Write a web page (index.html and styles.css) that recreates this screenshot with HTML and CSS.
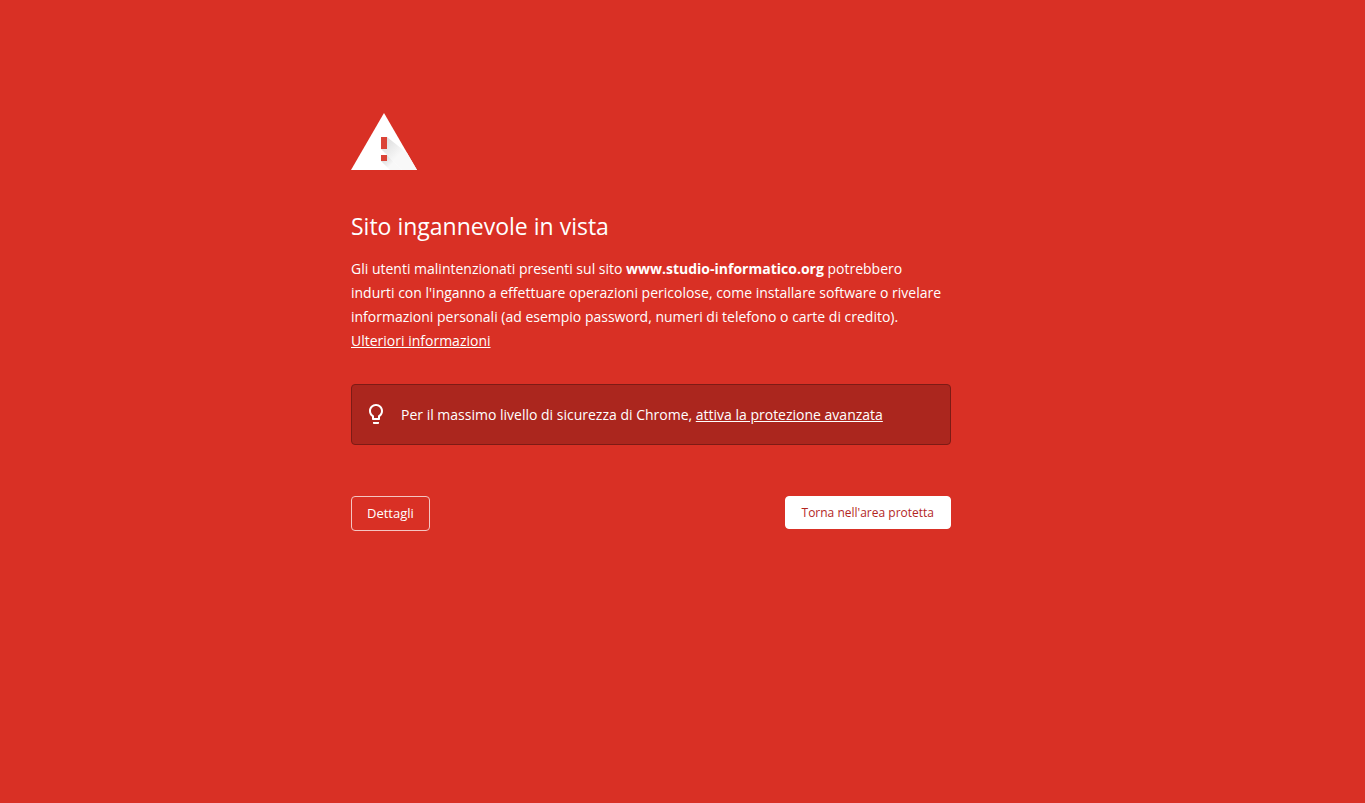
FILE: index.html
```html
<!DOCTYPE html>
<html lang="it">
<head>
<meta charset="utf-8">
<meta name="viewport" content="width=device-width, initial-scale=1">
<title>Errore di sicurezza</title>
<link rel="stylesheet" href="styles.css">
</head>
<body class="page">
<main class="warning">
  <svg class="warning-icon" viewBox="0 0 66 57" aria-hidden="true">
    <defs>
      <linearGradient id="shade" gradientUnits="userSpaceOnUse" x1="33" y1="29" x2="47" y2="43">
        <stop offset="0" stop-color="#dedede"/>
        <stop offset="1" stop-color="#f8f8f8"/>
      </linearGradient>
      <linearGradient id="shade-dot" gradientUnits="userSpaceOnUse" x1="33" y1="45" x2="40" y2="52">
        <stop offset="0" stop-color="#dcdcdc"/>
        <stop offset="1" stop-color="#f8f8f8"/>
      </linearGradient>
    </defs>
    <path fill="#fff" d="M33 0 66 57H0z"/>
    <path fill="url(#shade)" d="M36 24 56 40 66 57H51L30 36h6z"/>
    <path fill="url(#shade-dot)" d="M36 42 51 57H39L30 48h6z"/>
    <path fill="#db4437" d="M30 24h6v12h-6zM30 42h6v6h-6z"/>
  </svg>
  <h1 class="title">Sito ingannevole in vista</h1>
  <p class="message">Gli utenti malintenzionati presenti sul sito <strong>www.studio-informatico.org</strong> potrebbero indurti con l'inganno a effettuare operazioni pericolose, come installare software o rivelare informazioni personali (ad esempio password, numeri di telefono o carte di credito). <a class="link" href="#info">Ulteriori informazioni</a></p>
  <section class="promo">
    <svg class="bulb" viewBox="0 0 24 24" aria-hidden="true">
      <path fill="#fff" d="M9 21c0 .55.450 1 1 1h4c.550 0 1-.450 1-1v-1H9v1zm3-19C8.140 2 5 5.140 5 9c0 2.380 1.190 4.470 3 5.740V17c0 .550.450 1 1 1h6c.550 0 1-.450 1-1v-2.260c1.810-1.270 3-3.360 3-5.740 0-3.860-3.140-7-7-7zm2.850 11.100-.850.600V16h-4v-2.300l-.850-.600C7.800 12.160 7 10.630 7 9c0-2.760 2.240-5 5-5s5 2.240 5 5c0 1.630-.800 3.160-2.150 4.100z"/>
    </svg>
    <p class="promo-text">Per il massimo livello di sicurezza di Chrome, <a class="link" href="#protezione">attiva la protezione avanzata</a></p>
  </section>
  <div class="actions">
    <button class="button button-outline" type="button">Dettagli</button>
    <button class="button button-primary" type="button">Torna nell'area protetta</button>
  </div>
</main>
</body>
</html>
```
FILE: styles.css
```css
* {
  box-sizing: border-box;
}

.page {
  margin: 0;
  padding: 113px 63px 32px 0;
  background: #d93025;
  color: #fff;
  font-family: "Segoe UI", "Open Sans", "Noto Sans", sans-serif;
  font-size: 14px;
  line-height: 24px;
}

.warning {
  max-width: 600px;
  margin: 0 auto;
}

.warning-icon {
  display: block;
  width: 66px;
  height: 57px;
  margin-bottom: 41px;
}

.title {
  margin: 0 0 16px;
  font-size: 23px;
  font-weight: 400;
  line-height: 30px;
}

.message,
.promo-text {
  margin: 0;
}

.message {
  padding-right: 4px;
}

.link {
  color: inherit;
  text-decoration: underline;
  text-underline-offset: 1px;
}

.promo {
  display: flex;
  align-items: flex-start;
  gap: 13px;
  margin-top: 31px;
  padding: 17px 12px;
  border: 1px solid #7d1b15;
  border-radius: 4px;
  background: #ab261e;
}

.promo-text {
  padding-top: 1px;
}

.bulb {
  flex: none;
  width: 24px;
  height: 24px;
}

.actions {
  display: flex;
  align-items: flex-start;
  justify-content: space-between;
  margin-top: 51px;
}

.button {
  padding: 8px 16px;
  border: 1px solid #fff;
  border-radius: 4px;
  background: #fff;
  color: #b3261e;
  font-family: inherit;
  font-size: 12px;
  line-height: 15px;
}

.button-outline {
  padding: 9px 15px;
  border-color: #f4c5c2;
  background: transparent;
  color: #fff;
  font-size: 13px;
}
```
